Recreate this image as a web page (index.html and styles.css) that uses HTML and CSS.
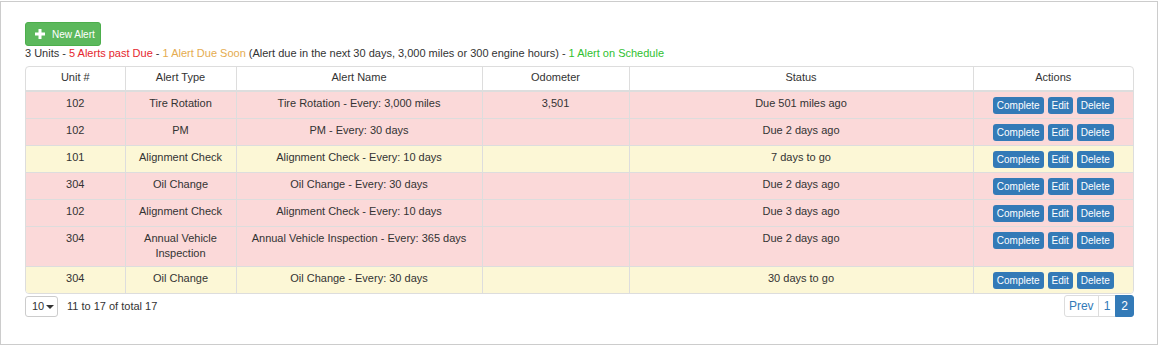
FILE: index.html
```html
<!DOCTYPE html>
<html>
<head>
<meta charset="utf-8">
<link rel="stylesheet" href="styles.css">
</head>
<body>
<div class="panel">
  <button class="btn-new"><svg class="plus" width="10" height="10" viewBox="0 0 10 10"><rect x="3.5" y="0" width="3" height="10" fill="#fff"/><rect x="0" y="3.5" width="10" height="3" fill="#fff"/></svg><span>New Alert</span></button>
  <div class="summary">3 Units - <span class="red">5 Alerts past Due</span> - <span class="gold">1 Alert Due Soon</span> (Alert due in the next 30 days, 3,000 miles or 300 engine hours) - <span class="green">1 Alert on Schedule</span></div>
  <div class="table-wrap">
    <table class="alerts">
      <colgroup>
        <col class="c-unit"><col class="c-type"><col class="c-name"><col class="c-odo"><col class="c-status"><col class="c-actions">
      </colgroup>
      <thead>
        <tr><th>Unit #</th><th>Alert Type</th><th>Alert Name</th><th>Odometer</th><th>Status</th><th>Actions</th></tr>
      </thead>
      <tbody>
        <tr class="danger"><td>102</td><td>Tire Rotation</td><td>Tire Rotation - Every: 3,000 miles</td><td>3,501</td><td>Due 501 miles ago</td><td><div class="acts"><button class="b">Complete</button><button class="b">Edit</button><button class="b">Delete</button></div></td></tr>
        <tr class="danger"><td>102</td><td>PM</td><td>PM - Every: 30 days</td><td></td><td>Due 2 days ago</td><td><div class="acts"><button class="b">Complete</button><button class="b">Edit</button><button class="b">Delete</button></div></td></tr>
        <tr class="warning"><td>101</td><td>Alignment Check</td><td>Alignment Check - Every: 10 days</td><td></td><td>7 days to go</td><td><div class="acts"><button class="b">Complete</button><button class="b">Edit</button><button class="b">Delete</button></div></td></tr>
        <tr class="danger"><td>304</td><td>Oil Change</td><td>Oil Change - Every: 30 days</td><td></td><td>Due 2 days ago</td><td><div class="acts"><button class="b">Complete</button><button class="b">Edit</button><button class="b">Delete</button></div></td></tr>
        <tr class="danger"><td>102</td><td>Alignment Check</td><td>Alignment Check - Every: 10 days</td><td></td><td>Due 3 days ago</td><td><div class="acts"><button class="b">Complete</button><button class="b">Edit</button><button class="b">Delete</button></div></td></tr>
        <tr class="danger"><td>304</td><td>Annual Vehicle Inspection</td><td>Annual Vehicle Inspection - Every: 365 days</td><td></td><td>Due 2 days ago</td><td><div class="acts"><button class="b">Complete</button><button class="b">Edit</button><button class="b">Delete</button></div></td></tr>
        <tr class="warning"><td>304</td><td>Oil Change</td><td>Oil Change - Every: 30 days</td><td></td><td>30 days to go</td><td><div class="acts"><button class="b">Complete</button><button class="b">Edit</button><button class="b">Delete</button></div></td></tr>
      </tbody>
    </table>
  </div>
  <div class="footer">
    <div class="left">
      <div class="size">10 <span class="caret"></span></div>
      <span class="info">11 to 17 of total 17</span>
    </div>
    <div class="pager">
      <span class="pg first">Prev</span><span class="pg">1</span><span class="pg active">2</span>
    </div>
  </div>
</div>
</body>
</html>
```
FILE: styles.css
```css
* { box-sizing: border-box; }
html, body { margin: 0; padding: 0; background: #fff; }
body {
  font-family: "Liberation Sans", Arial, sans-serif;
  font-size: 11px;
  color: #333;
  line-height: 15.7px;
}
.panel {
  margin-top: 1px;
  width: 1158px;
  height: 344px;
  border: 1px solid #ccc;
  padding: 20px 24px 0 24px;
}
.btn-new {
  display: flex;
  align-items: center;
  gap: 7px;
  height: 24px;
  width: 76px;
  padding: 0 0 0 9px;
  border: 1px solid #4cae4c;
  border-radius: 3px;
  background: #5cb85c;
  color: #fff;
  font-family: inherit;
  font-size: 10px;
  cursor: pointer;
}
.plus { flex: none; }
.summary { height: 15px; line-height: 15px; }
.red { color: #e5262e; }
.gold { color: #e5ac4f; }
.green { color: #2fbf2f; }
.table-wrap {
  margin-top: 5px;
  width: 1109px;
  border: 1px solid #ddd;
  border-radius: 4px;
  overflow: hidden;
}
.alerts {
  width: 100%;
  border-collapse: collapse;
  table-layout: fixed;
}
.c-unit { width: 99px; }
.c-type { width: 111px; }
.c-name { width: 246px; }
.c-odo { width: 147px; }
.c-status { width: 344px; }
.c-actions { width: 160px; }
.alerts th, .alerts td {
  text-align: center;
  vertical-align: top;
  padding: 4px 8px;
  border: 1px solid #ddd;
  font-weight: normal;
}
.alerts tr > :first-child { border-left: 0; }
.alerts tr > :last-child { border-right: 0; }
.alerts thead th { border-top: 0; border-bottom: 2px solid #ddd; padding: 3px 8px 4px; }
.alerts tbody tr:last-child td { border-bottom: 0; }
.danger td { background: #fbd9d9; }
.warning td { background: #fcf7d6; }
.acts { display: flex; justify-content: center; gap: 4px; margin-top: 1px; }
.b {
  height: 17px;
  padding: 0 4px;
  border: 0;
  border-radius: 3px;
  background: #337ab7;
  color: #fff;
  font-family: inherit;
  font-size: 10px;
  line-height: 17px;
}
.footer {
  display: flex;
  justify-content: space-between;
  align-items: flex-start;
  margin-top: 1px;
  width: 1109px;
}
.left { display: flex; align-items: center; gap: 9px; margin-top: 1px; }
.size {
  width: 33px;
  height: 21px;
  border: 1px solid #ccc;
  border-radius: 3px;
  display: flex;
  align-items: center;
  padding-left: 6px;
  gap: 2px;
  font-size: 11px;
}
.caret {
  width: 0; height: 0;
  border-left: 4px solid transparent;
  border-right: 4px solid transparent;
  border-top: 4px solid #333;
}
.pager { display: flex; }
.pg {
  height: 22px;
  line-height: 20px;
  padding: 0 5px;
  border: 1px solid #ddd;
  margin-left: -1px;
  color: #337ab7;
  font-size: 12px;
}
.pg.first { border-radius: 3px 0 0 3px; padding: 0 4px; }
.pg.active { background: #337ab7; border-color: #337ab7; color: #fff; border-radius: 0 3px 3px 0; }
```
